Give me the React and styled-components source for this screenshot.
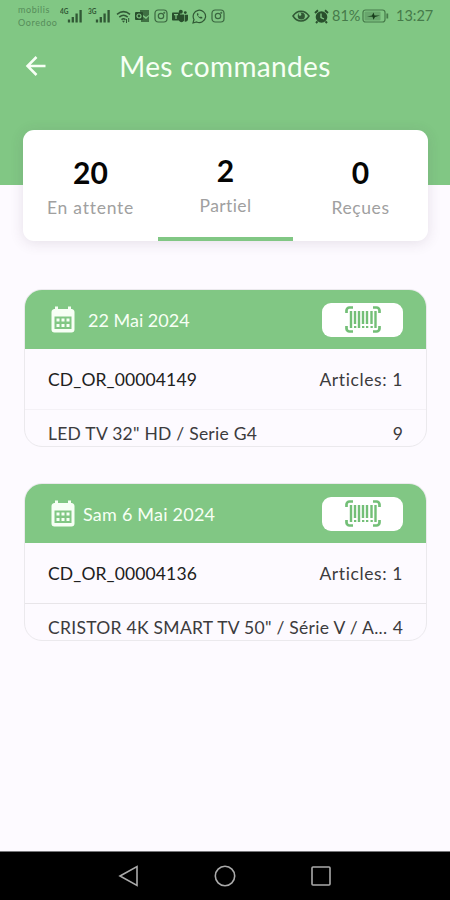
import React from 'react';
import styled, { createGlobalStyle } from 'styled-components';

const GlobalStyle = createGlobalStyle`
  * {
    box-sizing: border-box;
  }
  body {
    margin: 0;
    background: #fdfaff;
    font-family: Lato, "Liberation Sans", sans-serif;
  }
  svg {
    display: block;
    flex: none;
  }
`

const Screen = styled.div`
  display: flex;
  flex-direction: column;
  width: 450px;
  height: 900px;
  overflow: hidden;
  background: #fdfaff;
`

const Header = styled.header`
  flex: none;
  height: 185px;
  background: #81c784;
`

const StatusBar = styled.div`
  display: flex;
  align-items: center;
  height: 32px;
  padding: 0 16px 0 18px;
  color: #3b6740;
`

const Carriers = styled.div`
  width: 42px;
  font-size: 9px;
  line-height: 13px;
  letter-spacing: 0.6px;
  color: #568c5a;
`

const StatusIcons = styled.div`
  display: flex;
  align-items: center;
  gap: ${props => props.$gap}px;
`

const StatusRight = styled.div`
  display: flex;
  align-items: center;
  margin-left: auto;
`

const StatusText = styled.span`
  width: ${props => props.$width}px;
  margin-left: ${props => props.$left}px;
  font-size: 14.5px;
  line-height: 18px;
  letter-spacing: ${props => props.$spacing || 0}px;
  white-space: nowrap;
  color: #467a4a;
`

const TitleBar = styled.div`
  display: grid;
  grid-template-columns: 48px 1fr 48px;
  align-items: center;
  height: 68px;
  padding: 0 12px;
`

const BackButton = styled.button`
  display: flex;
  justify-content: center;
  padding: 0;
  border: 0;
  background: none;
`

const Title = styled.h1`
  margin: 0;
  text-align: center;
  font-size: 28px;
  font-weight: 400;
  line-height: 34px;
  letter-spacing: 0.35px;
  white-space: nowrap;
  color: #f7fff5;
`

const Tabs = styled.nav`
  position: relative;
  flex: none;
  display: grid;
  grid-template-columns: repeat(3, 1fr);
  height: 111px;
  margin: -55px 22px 0 23px;
  border-radius: 11px;
  background: #fff;
  box-shadow: 0 2px 14px rgba(70, 50, 80, 0.13);
`

const Tab = styled.div`
  display: flex;
  flex-direction: column;
  align-items: center;
  padding-top: ${props => (props.$active ? 22 : 24)}px;
  border-bottom: ${props => (props.$active ? '4px solid #81c784' : 0)};
`

const Count = styled.div`
  font-size: 30px;
  font-weight: 700;
  line-height: 36px;
  color: #050505;
`

const TabLabel = styled.div`
  margin-top: 7px;
  font-size: 17.5px;
  line-height: 22px;
  letter-spacing: ${props => props.$spacing}px;
  white-space: nowrap;
  color: #a0a0a0;
`

const Orders = styled.main`
  flex: 1;
  display: flex;
  flex-direction: column;
  gap: 36px;
  padding: 48px 23px 0 24px;
`

const Card = styled.section`
  height: 158px;
  overflow: hidden;
  border: 1.5px solid #ebe9ed;
  border-radius: 18px;
`

const CardHeader = styled.div`
  display: flex;
  align-items: center;
  height: 59px;
  padding: 0 23px 0 26px;
  background: #81c784;
`

const DateText = styled.span`
  margin-left: ${props => props.$left}px;
  font-size: 18px;
  line-height: 24px;
  letter-spacing: ${props => props.$spacing}px;
  white-space: nowrap;
  color: #f7fff5;
`

const ScanButton = styled.button`
  display: flex;
  align-items: center;
  justify-content: center;
  width: 81px;
  height: 34px;
  margin-left: auto;
  padding: 0;
  border: 0;
  border-radius: 9px;
  background: #fff;
`

const Row = styled.div`
  display: flex;
  justify-content: space-between;
  height: ${props => props.$height}px;
  padding: ${props => props.$top}px 23px 0 23px;
  border-bottom: 1px solid ${props => props.$line || 'transparent'};
`

const RowText = styled.span`
  font-size: 17.5px;
  line-height: 22px;
  letter-spacing: ${props => props.$spacing || 0}px;
  white-space: nowrap;
  color: ${props => (props.$strong ? '#202020' : '#3c3b3d')};
`

const NavBar = styled.footer`
  flex: none;
  display: flex;
  align-items: center;
  justify-content: center;
  gap: 74px;
  height: 49px;
  border-top: 1px solid #77777a;
  background: #000;
`

const Signal = ({ label }) => (
  <svg width="24" height="16" viewBox="0 0 24 16">
    <text x="0" y="6" fontSize="6.5" fontWeight="700" fill="#315835">{label}</text>
    <path d="M9 11.5v3M12.8 9v5.5M16.6 5.5v9M20.6 2v12.5" stroke="#315835" strokeWidth="2.3" />
  </svg>
)

const Wifi = () => (
  <svg width="15" height="15" viewBox="0 0 15 15" fill="none" stroke="#315835" strokeWidth="1.5">
    <path d="M1 5.3C5 2 10 2 14 5.3M3.3 8.1c2.5-2.2 5.9-2.2 8.4 0M5.5 10.6c1.2-1 2.8-1 4 0" />
    <path d="M6 11.7h3l-1.5 2z" fill="#315835" stroke="none" />
    <path d="M10.5 10v4M12.7 9v4" strokeWidth="1" />
  </svg>
)

const Outlook = () => (
  <svg width="15" height="14" viewBox="0 0 15 14">
    <path d="M5 1h9v5l-3 2-3-2H5zM7 7l4 3 3-3v6H6V9z" fill="#3f7043" />
    <rect y="3" width="8" height="8" rx="1" fill="#284f2c" />
    <circle cx="4" cy="7" r="2" fill="none" stroke="#81c784" strokeWidth="1.2" />
  </svg>
)

const Instagram = () => (
  <svg width="14" height="14" viewBox="0 0 14 14" fill="none" stroke="#3b6740" strokeWidth="1.2">
    <rect x="1" y="1" width="12" height="12" rx="3.2" />
    <circle cx="7" cy="7" r="2.7" />
    <circle cx="10.3" cy="3.7" r=".4" />
  </svg>
)

const Teams = () => (
  <svg width="16" height="15" viewBox="0 0 16 15" fill="#284f2c">
    <circle cx="8.8" cy="2.8" r="2" />
    <circle cx="13.3" cy="3.6" r="1.4" />
    <path d="M7 5.5h5v6.3a3 3 0 0 1-5 0zM12.6 5.8H16v4.5c0 1.5-1.4 2.5-3.4 2.3z" />
    <rect y="3.5" width="8" height="8" rx=".8" />
    <path d="M2 5.7h4M4 5.7v4.2" stroke="#81c784" strokeWidth="1.2" />
  </svg>
)

const WhatsApp = () => (
  <svg width="15" height="15" viewBox="0 0 15 15" fill="none" stroke="#315835" strokeWidth="1.2">
    <path d="M1 14l1-3.5A6.2 6.2 0 1 1 4.7 13z" />
    <path d="M5.2 4.3c-1.5 1.4 2.7 6.4 5 5.1l.2-1.2-1.6-.8-.8.8C7 7.9 6.4 7.2 6 6.3l.6-.7-.5-1.4z" fill="#315835" stroke="none" />
  </svg>
)

const Eye = () => (
  <svg width="18" height="14" viewBox="0 0 18 14" fill="none" stroke="#315835" strokeWidth="1.5">
    <path d="M1 7c4-6.5 12-6.5 16 0-4 6.5-12 6.5-16 0z" />
    <circle cx="9.3" cy="7" r="3.6" fill="#315835" stroke="none" />
    <circle cx="8" cy="5.4" r="1.3" fill="#81c784" stroke="none" />
  </svg>
)

const Alarm = () => (
  <svg width="15" height="15" viewBox="0 0 15 15">
    <circle cx="7.5" cy="8" r="5.8" fill="#284f2c" />
    <path d="M1 4l3-2.7M14 4l-3-2.7M3.5 12.3L2 14M11.5 12.3L13 14" stroke="#284f2c" strokeWidth="2" />
    <path d="M7 4.5v4l3 1.5" fill="none" stroke="#81c784" strokeWidth="1.3" />
  </svg>
)

const Battery = () => (
  <svg width="27" height="14" viewBox="0 0 27 14">
    <rect x="1" y="1" width="22" height="12" rx="2.5" fill="none" stroke="#467a4a" strokeWidth="1.2" />
    <rect x="2.5" y="2.5" width="16" height="9" rx="1" fill="#69a66d" />
    <path d="M5 7.5l5-1 1.5-3 1 3H18l-5 1.5-1.5 2.7-1-3z" fill="#173c1b" />
    <path d="M25.3 4.5v5" stroke="#467a4a" strokeWidth="1.8" />
  </svg>
)

const BackArrow = () => (
  <svg width="22" height="22" viewBox="0 0 22 22" fill="none" stroke="#f7fff5" strokeWidth="2.5">
    <path d="M20.5 11H2.5M11.5 2L2.5 11l9 9" />
  </svg>
)

const Calendar = () => (
  <svg width="24" height="27" viewBox="0 0 24 27">
    <path
      d="M4 .5h3V3h10V.5h3V3a3 3 0 0 1 3.5 3v17.500a3 3 0 0 1-3 3h-17a3 3 0 0 1-3-3V6A3 3 0 0 1 4 3z"
      fill="#f7fff5"
    />
    <path d="M3.500 10.500h17v12.500h-17z" fill="#81c784" />
    <path
      d="M5.500 12.500h3v3h-3zM10.500 12.500h3v3h-3zM15.500 12.500h3v3h-3zM5.500 18h3v3h-3zM10.500 18h3v3h-3zM15.500 18h3v3h-3z"
      fill="#f7fff5"
    />
  </svg>
)

const Barcode = () => (
  <svg width="36" height="27" viewBox="0 0 36 27" fill="none" stroke="#73bf77">
    <path
      d="M1.500 7V4.500a3 3 0 0 1 3-3H8M28 1.500h3.500a3 3 0 0 1 3 3V7M34.500 20v2.500a3 3 0 0 1-3 3H28M8 25.500H4.500a3 3 0 0 1-3-3V20"
      strokeWidth="2.700"
    />
    <path d="M6 5v17M14 5v17M30.500 5v17" strokeWidth="2.400" />
    <path d="M10 5v13M18 5v13M22 5v13M26.500 5v13" strokeWidth="2.400" />
    <path d="M9 21h2.300M17 21h2.300M21 21h2.300M25.500 21h2.300" strokeWidth="2.200" />
  </svg>
)

const tabs = [
  { count: 20, label: 'En attente', spacing: 0.75 },
  { count: 2, label: 'Partiel', spacing: 0.4, active: true },
  { count: 0, label: 'Reçues', spacing: 0.6 },
]

const orders = [
  {
    date: '22 Mai 2024',
    dateLeft: 13,
    dateSpacing: 0,
    code: 'CD_OR_00004149',
    product: 'LED TV 32" HD / Serie G4',
    spacing: 0.25,
    quantity: 9,
    line: '#f4f1f6',
  },
  {
    date: 'Sam 6 Mai 2024',
    dateLeft: 8,
    dateSpacing: 0.22,
    code: 'CD_OR_00004136',
    product: 'CRISTOR 4K SMART TV 50" / Série V / A...',
    spacing: 0.28,
    quantity: 4,
    line: '#e8e5e9',
  },
]

const OrderCard = ({ order }) => (
  <Card>
    <CardHeader>
      <Calendar />
      <DateText $left={order.dateLeft} $spacing={order.dateSpacing}>{order.date}</DateText>
      <ScanButton aria-label="Scanner">
        <Barcode />
      </ScanButton>
    </CardHeader>
    <Row $height={61} $top={20} $line={order.line}>
      <RowText $strong $spacing={0.12}>{order.code}</RowText>
      <RowText $spacing={0.6}>Articles: 1</RowText>
    </Row>
    <Row $height={40} $top={13}>
      <RowText $spacing={order.spacing}>{order.product}</RowText>
      <RowText>{order.quantity}</RowText>
    </Row>
  </Card>
)

const App = () => {
  return (
    <>
      <GlobalStyle />
      <Screen>
        <Header>
          <StatusBar>
            <Carriers>
              <div>mobilis</div>
              <div>Ooredoo</div>
            </Carriers>
            <StatusIcons $gap={4}>
              <Signal label="4G" />
              <Signal label="3G" />
              <Wifi />
              <Outlook />
              <Instagram />
              <Teams />
              <WhatsApp />
              <Instagram />
            </StatusIcons>
            <StatusRight>
              <StatusIcons $gap={4}>
                <Eye />
                <Alarm />
              </StatusIcons>
              <StatusText $width={30} $left={3}>81%</StatusText>
              <Battery />
              <StatusText $width={38} $left={7}>13:27</StatusText>
            </StatusRight>
          </StatusBar>
          <TitleBar>
            <BackButton aria-label="Retour">
              <BackArrow />
            </BackButton>
            <Title>Mes commandes</Title>
          </TitleBar>
        </Header>
        <Tabs>
          {tabs.map(tab => (
            <Tab key={tab.label} $active={tab.active}>
              <Count>{tab.count}</Count>
              <TabLabel $spacing={tab.spacing}>{tab.label}</TabLabel>
            </Tab>
          ))}
        </Tabs>
        <Orders>
          {orders.map(order => (
            <OrderCard key={order.code} order={order} />
          ))}
        </Orders>
        <NavBar>
          <svg width="22" height="22" viewBox="0 0 22 22" fill="none" stroke="#aaa" strokeWidth="1.6">
            <path d="M2 11L19 1.5v19z" />
          </svg>
          <svg width="22" height="22" viewBox="0 0 22 22" fill="none" stroke="#aaa" strokeWidth="1.6">
            <circle cx="11" cy="11" r="9.7" />
          </svg>
          <svg width="22" height="22" viewBox="0 0 22 22" fill="none" stroke="#aaa" strokeWidth="1.6">
            <rect x="2" y="2" width="18" height="18" rx="1" />
          </svg>
        </NavBar>
      </Screen>
    </>
  );
};

export default App;
